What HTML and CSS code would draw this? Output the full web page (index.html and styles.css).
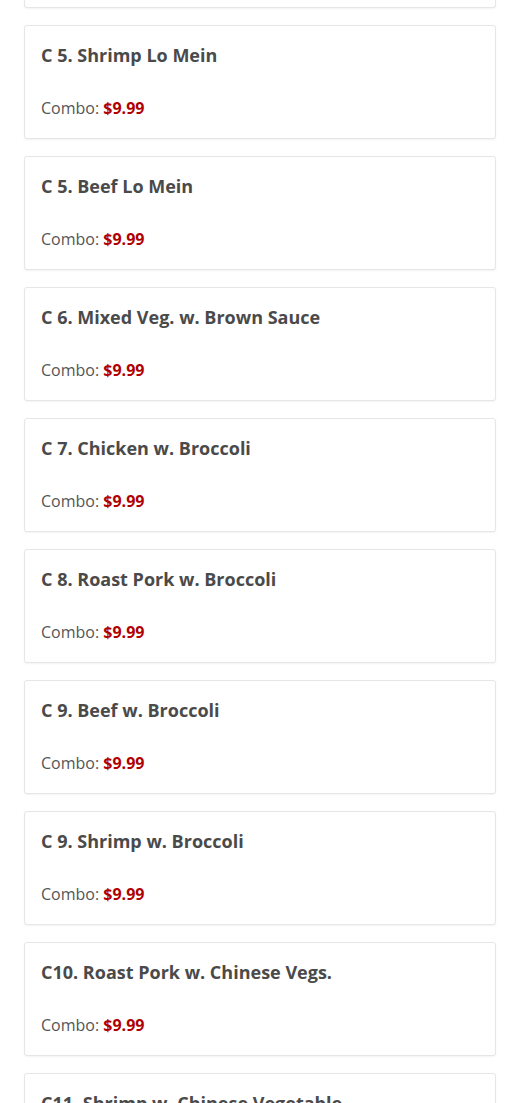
FILE: index.html
```html
<!DOCTYPE html>
<html lang="en">
<head>
  <meta charset="UTF-8">
  <meta name="viewport" content="width=device-width, initial-scale=1.0">
  <title>Combo Menu</title>
  <link rel="stylesheet" href="styles.css">
</head>
<body>

  <div class="menu-list">
    <div class="item item-cut"></div>

    <div class="item">
      <h3>C 5. Shrimp Lo Mein</h3>
      <p>Combo: <span class="price">$9.99</span></p>
    </div>

    <div class="item">
      <h3>C 5. Beef Lo Mein</h3>
      <p>Combo: <span class="price">$9.99</span></p>
    </div>

    <div class="item">
      <h3>C 6. Mixed Veg. w. Brown Sauce</h3>
      <p>Combo: <span class="price">$9.99</span></p>
    </div>

    <div class="item">
      <h3>C 7. Chicken w. Broccoli</h3>
      <p>Combo: <span class="price">$9.99</span></p>
    </div>

    <div class="item">
      <h3>C 8. Roast Pork w. Broccoli</h3>
      <p>Combo: <span class="price">$9.99</span></p>
    </div>

    <div class="item">
      <h3>C 9. Beef w. Broccoli</h3>
      <p>Combo: <span class="price">$9.99</span></p>
    </div>

    <div class="item">
      <h3>C 9. Shrimp w. Broccoli</h3>
      <p>Combo: <span class="price">$9.99</span></p>
    </div>

    <div class="item">
      <h3>C10. Roast Pork w. Chinese Vegs.</h3>
      <p>Combo: <span class="price">$9.99</span></p>
    </div>

    <div class="item">
      <h3>C11. Shrimp w. Chinese Vegetable</h3>
      <p>Combo: <span class="price">$9.99</span></p>
    </div>
  </div>

</body>
</html>
```

FILE: styles.css
```css
* {
  margin: 0;
  padding: 0;
  box-sizing: border-box;
}

body {
  background-color: #fff;
  font-family: 'Open Sans', sans-serif;
  color: #555;
  overflow: hidden;
}

.menu-list {
  display: flex;
  flex-direction: column;
  gap: 17px;
  padding: 0 29px 0 24px;
}

.item {
  background: #fff;
  border: 1px solid #e6e6e6;
  border-radius: 3px;
  box-shadow: 0 1px 2px rgba(0, 0, 0, 0.05);
  padding: 16px 16px 13px;
  height: 114px;
}

/* card scrolled mostly out of view */
.item-cut {
  height: 8px;
  border-top: none;
  border-radius: 0 0 3px 3px;
  padding: 0;
}

.item h3 {
  font-size: 18px;
  font-weight: 700;
  line-height: 27px;
  color: #4a4a4a;
  margin-bottom: 27px;
}

.item p {
  font-size: 16px;
  line-height: 24px;
  color: #555;
}

.price {
  color: #b00000;
  font-weight: 700;
}
```
